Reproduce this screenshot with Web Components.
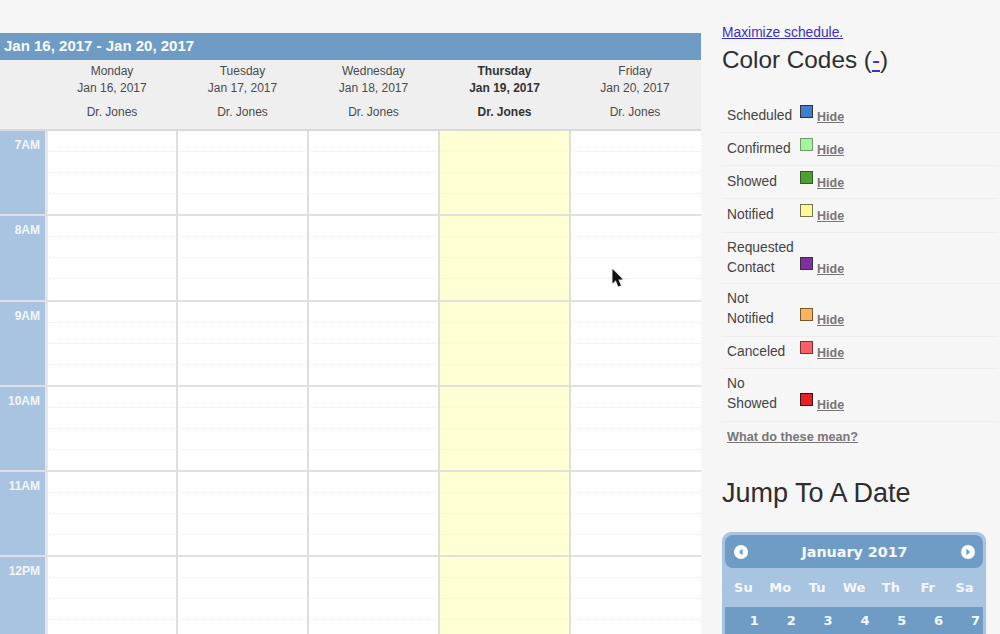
<!DOCTYPE html>
<html>
<head>
<meta charset="utf-8">
<title>Schedule</title>
<style>
    html, body { margin: 0; height: 634px; overflow: hidden; background: #f6f6f7; }
    body { font-family: "Liberation Sans", Arial, sans-serif; color: #333; }
</style>
</head>
<body>
<app-page>
    <week-schedule slot="main" title-text="Jan 16, 2017 - Jan 20, 2017">
        <day-head>Monday<span slot="date">Jan 16, 2017</span><span slot="doctor">Dr. Jones</span></day-head>
        <day-head>Tuesday<span slot="date">Jan 17, 2017</span><span slot="doctor">Dr. Jones</span></day-head>
        <day-head>Wednesday<span slot="date">Jan 18, 2017</span><span slot="doctor">Dr. Jones</span></day-head>
        <day-head today>Thursday<span slot="date">Jan 19, 2017</span><span slot="doctor">Dr. Jones</span></day-head>
        <day-head last>Friday<span slot="date">Jan 20, 2017</span><span slot="doctor">Dr. Jones</span></day-head>
    </week-schedule>
    <side-bar slot="side">
        <color-codes>
            <code-row color="#3f7fcf" edge="#333">Scheduled</code-row>
            <code-row color="#a4f59c" edge="#6f9a6c">Confirmed</code-row>
            <code-row color="#4f9f35" edge="#2f5f20">Showed</code-row>
            <code-row color="#fff79a" edge="#77744c" style="--pb:8px">Notified</code-row>
            <code-row color="#7f2fa5" edge="#333" style="--pt:4px;--pb:6px">Requested<br>Contact</code-row>
            <code-row color="#ffb15f" edge="#77582f" style="--pt:4px;--pb:8px">Not<br>Notified</code-row>
            <code-row color="#f95f67" edge="#7a3034" style="--pt:4px">Canceled</code-row>
            <code-row color="#e81f27" edge="#331014" style="--pt:4px;--pb:8px">No<br>Showed</code-row>
        </color-codes>
        <jump-calendar></jump-calendar>
    </side-bar>
    <mouse-pointer slot="over"></mouse-pointer>
</app-page>

<script>
class AppPage extends HTMLElement {
    constructor() {
        super();
        this.attachShadow({mode: 'open'});
        this.shadowRoot.innerHTML = `
        <style>
            :host { display: flex; position: relative; width: 1000px; height: 634px; overflow: hidden; }
            #main { display: block; width: 701px; flex: none; padding-top: 33px; }
            #side { display: block; flex: 1; }
        </style>
        <div id="main"><slot name="main"></slot></div>
        <div id="side"><slot name="side"></slot></div>
        <slot name="over"></slot>
        `;
    }
}

class DayHead extends HTMLElement {
    constructor() {
        super();
        this.attachShadow({mode: 'open'});
        this.shadowRoot.innerHTML = `
        <style>
            :host { display: block; text-align: center; font-size: 12px; color: #4a4a4a; padding: 3px 2px 0 0; line-height: 17px; }
            :host([today]) { font-weight: bold; color: #333; }
            #doctor { margin-top: 7px; }
            div { display: block; }
        </style>
        <div><slot></slot></div>
        <div><slot name="date"></slot></div>
        <div id="doctor"><slot name="doctor"></slot></div>
        `;
    }
}

class HourRow extends HTMLElement {
    constructor() {
        super();
        this.attachShadow({mode: 'open'});
        const cells = [0, 1, 2, 3, 4].map(i => `
            <div class="cell ${i === 3 ? 'today' : ''} ${i === 4 ? 'last' : ''}">
                <i></i><i></i><i></i><i></i>
            </div>`).join('');
        this.shadowRoot.innerHTML = `
        <style>
            :host { display: grid; grid-template-columns: 48px 130px 131px 131px 131px 130px; height: 85.25px; box-sizing: border-box; border-bottom: 2px solid #e0e0e0; }
            #time { background: #a8c4e0; border-right: 3px solid #e6e6e8; color: #f4f7fb; font-weight: bold; font-size: 12px; text-align: right; padding: 7px 5px 0 0; line-height: 14px; box-sizing: border-box; }
            .cell { background: #fff; border-right: 2px solid #dedede; display: flex; flex-direction: column; }
            .cell.today { background: #ffffd4; }
            .cell.last { border-right: 0; }
            i { display: block; flex: 1; margin: 0 1px; border-bottom: 1px dotted #e6e6e6; }
            i:last-child { border-bottom: 0; }
            .today i { border-bottom-color: #f4f4cc; }
            .last i { margin-right: 0; }
        </style>
        <div id="time"><slot></slot></div>
        ${cells}
        `;
    }
}

class WeekSchedule extends HTMLElement {
    constructor() {
        super();
        this.attachShadow({mode: 'open'});
        const hours = ['7AM', '8AM', '9AM', '10AM', '11AM', '12PM'];
        this.shadowRoot.innerHTML = `
        <style>
            :host { display: block; }
            #title { background: #6f9cc4; color: #fbfcfe; font-weight: bold; font-size: 15px; line-height: 25px; height: 27px; padding-left: 4px; box-sizing: border-box; }
            #heads { display: grid; grid-template-columns: 48px 130px 131px 131px 131px 130px; height: 71px; box-sizing: border-box; background: #efeff0; border-bottom: 2px solid #d9d9d9; }
        </style>
        <div id="title"></div>
        <div id="heads"><div></div><slot></slot></div>
        <div id="rows">${hours.map(h => `<hour-row>${h}</hour-row>`).join('')}</div>
        `;
        this.shadowRoot.getElementById('title').textContent = this.getAttribute('title-text');
    }
}

class SideBar extends HTMLElement {
    constructor() {
        super();
        this.attachShadow({mode: 'open'});
        this.shadowRoot.innerHTML = `
        <style>
            :host { display: block; padding: 24px 0 0 21px; }
            a { font-size: 13.8px; line-height: 17px; color: #3b2fc4; text-decoration: underline; display: block; }
        </style>
        <a href="#">Maximize schedule.</a>
        <slot></slot>
        `;
    }
}

class ColorCodes extends HTMLElement {
    constructor() {
        super();
        this.attachShadow({mode: 'open'});
        this.shadowRoot.innerHTML = `
        <style>
            :host { display: block; width: 276px; }
            h2 { margin: 0; padding-top: 3px; font-weight: normal; font-size: 24.3px; line-height: 32px; color: #2e2e2e; height: 56px; }
            h2 a { color: #3b2fc4; }
            #more { padding: 7px 5px; font-size: 12.7px; line-height: 16px; font-weight: bold; color: #777; text-decoration: underline; display: block; }
        </style>
        <h2>Color Codes (<a href="#">-</a>)</h2>
        <slot></slot>
        <a id="more" href="#">What do these mean?</a>
        `;
    }
}

class CodeRow extends HTMLElement {
    constructor() {
        super();
        this.attachShadow({mode: 'open'});
        this.shadowRoot.innerHTML = `
        <style>
            :host { display: flex; align-items: flex-end; padding: var(--pt, 5px) 0 var(--pb, 7px) 5px; border-bottom: 1px solid #eeeeef; font-size: 13.8px; line-height: 20px; color: #444; }
            #label { width: 73px; flex: none; padding-top: 1px; margin-bottom: -1px; }
            #swatch { width: 11px; height: 11px; border: 1px solid #333; margin: 0 4px 7px 0; flex: none; }
            a { font-size: 12.5px; font-weight: bold; color: #777; line-height: 16px; }
        </style>
        <div id="label"><slot></slot></div>
        <div id="swatch"></div>
        <a href="#">Hide</a>
        `;
        const swatch = this.shadowRoot.getElementById('swatch');
        swatch.style.background = this.getAttribute('color');
        swatch.style.borderColor = this.getAttribute('edge');
    }
}

class JumpCalendar extends HTMLElement {
    constructor() {
        super();
        this.attachShadow({mode: 'open'});
        const names = ['Su', 'Mo', 'Tu', 'We', 'Th', 'Fr', 'Sa'];
        const days = [1, 2, 3, 4, 5, 6, 7];
        this.shadowRoot.innerHTML = `
        <style>
            :host { display: block; width: 264px; margin-top: 25px; }
            h2 { margin: 0 0 23px; font-weight: normal; font-size: 27px; line-height: 32px; color: #2e2e2e; }
            #cal { background: #a8c4e0; border-radius: 9px 9px 0 0; padding: 3px 3px 0; font-family: "DejaVu Sans", sans-serif; font-weight: bold; color: #f6f8fb; height: 110px; box-sizing: border-box; }
            #bar { background: #6f9cc4; border-radius: 8px; height: 33px; display: flex; align-items: center; justify-content: space-between; padding: 0 8px 0 9px; font-size: 14.3px; }
            svg { width: 14px; height: 14px; display: block; }
            .week { display: grid; grid-template-columns: repeat(7, 1fr); font-size: 13px; }
            #names { height: 39px; align-items: center; text-align: center; }
            #days { background: #6f9cc4; height: 36px; text-align: right; line-height: 27px; }
            #days span { padding-right: 3px; }
        </style>
        <h2>Jump To A Date</h2>
        <div id="cal">
            <div id="bar">
                <svg viewBox="0 0 14 14"><circle cx="7" cy="7" r="7" fill="#fff"/><path d="M8.6 3.6 5 7l3.6 3.4z" fill="#6f9cc4"/></svg>
                <span>January 2017</span>
                <svg viewBox="0 0 14 14"><circle cx="7" cy="7" r="7" fill="#fff"/><path d="M5.4 3.6 9 7l-3.6 3.4z" fill="#6f9cc4"/></svg>
            </div>
            <div class="week" id="names">${names.map(n => `<span>${n}</span>`).join('')}</div>
            <div class="week" id="days">${days.map(d => `<span>${d}</span>`).join('')}</div>
        </div>
        `;
    }
}

class MousePointer extends HTMLElement {
    constructor() {
        super();
        this.attachShadow({mode: 'open'});
        this.shadowRoot.innerHTML = `
        <style>
            :host { position: absolute; left: 612px; top: 268px; width: 12px; height: 21px; }
            svg { display: block; filter: drop-shadow(0 0 1px rgba(0,0,0,.25)); }
        </style>
        <svg width="12" height="21" viewBox="0 0 12 21"><path d="M.5 1v14.5l3.3-3.2 2.5 6.2 2.6-1.1-2.6-6h4.6z" fill="#111"/></svg>
        `;
    }
}

customElements.define('app-page', AppPage);
customElements.define('day-head', DayHead);
customElements.define('hour-row', HourRow);
customElements.define('week-schedule', WeekSchedule);
customElements.define('side-bar', SideBar);
customElements.define('color-codes', ColorCodes);
customElements.define('code-row', CodeRow);
customElements.define('jump-calendar', JumpCalendar);
customElements.define('mouse-pointer', MousePointer);
</script>
</body>
</html>
